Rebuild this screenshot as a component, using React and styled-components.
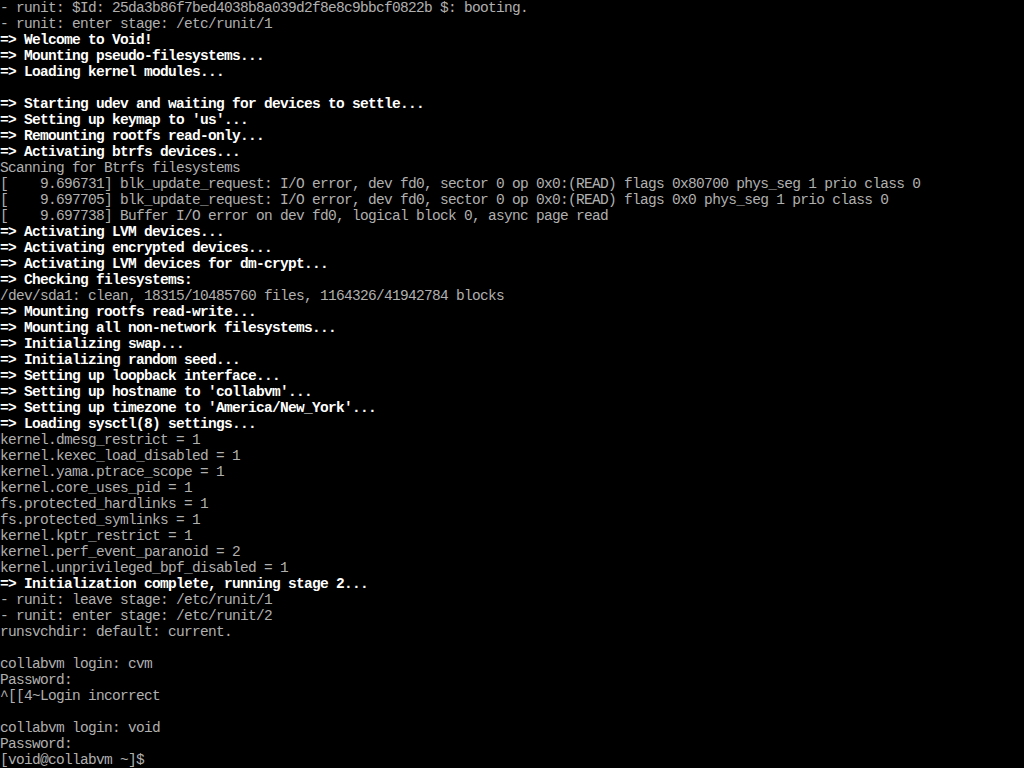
import React from "react";
import styled, { createGlobalStyle } from "styled-components";

const Global = createGlobalStyle`
  html, body {
    margin: 0;
    padding: 0;
    background: #000;
  }
  body {
    width: 1024px;
    height: 768px;
    overflow: hidden;
  }
`;

const Screen = styled.div`
  width: 1024px;
  height: 768px;
  background: #000;
  display: flex;
  flex-direction: column;
  overflow: hidden;
  font-family: "Liberation Mono", "DejaVu Sans Mono", monospace;
  font-size: 14.5px;
  letter-spacing: -0.7px;
`;

const Line = styled.div`
  height: 16px;
  line-height: 16px;
  white-space: pre;
  color: ${(p) => (p.$bright ? "#ffffff" : "#b0b0b0")};
  font-weight: ${(p) => (p.$bright ? 700 : 400)};
`;

const lines = [
  "- runit: $Id: 25da3b86f7bed4038b8a039d2f8e8c9bbcf0822b $: booting.",
  "- runit: enter stage: /etc/runit/1",
  "=> Welcome to Void!",
  "=> Mounting pseudo-filesystems...",
  "=> Loading kernel modules...",
  "",
  "=> Starting udev and waiting for devices to settle...",
  "=> Setting up keymap to 'us'...",
  "=> Remounting rootfs read-only...",
  "=> Activating btrfs devices...",
  "Scanning for Btrfs filesystems",
  "[    9.696731] blk_update_request: I/O error, dev fd0, sector 0 op 0x0:(READ) flags 0x80700 phys_seg 1 prio class 0",
  "[    9.697705] blk_update_request: I/O error, dev fd0, sector 0 op 0x0:(READ) flags 0x0 phys_seg 1 prio class 0",
  "[    9.697738] Buffer I/O error on dev fd0, logical block 0, async page read",
  "=> Activating LVM devices...",
  "=> Activating encrypted devices...",
  "=> Activating LVM devices for dm-crypt...",
  "=> Checking filesystems:",
  "/dev/sda1: clean, 18315/10485760 files, 1164326/41942784 blocks",
  "=> Mounting rootfs read-write...",
  "=> Mounting all non-network filesystems...",
  "=> Initializing swap...",
  "=> Initializing random seed...",
  "=> Setting up loopback interface...",
  "=> Setting up hostname to 'collabvm'...",
  "=> Setting up timezone to 'America/New_York'...",
  "=> Loading sysctl(8) settings...",
  "kernel.dmesg_restrict = 1",
  "kernel.kexec_load_disabled = 1",
  "kernel.yama.ptrace_scope = 1",
  "kernel.core_uses_pid = 1",
  "fs.protected_hardlinks = 1",
  "fs.protected_symlinks = 1",
  "kernel.kptr_restrict = 1",
  "kernel.perf_event_paranoid = 2",
  "kernel.unprivileged_bpf_disabled = 1",
  "=> Initialization complete, running stage 2...",
  "- runit: leave stage: /etc/runit/1",
  "- runit: enter stage: /etc/runit/2",
  "runsvchdir: default: current.",
  "",
  "collabvm login: cvm",
  "Password:",
  "^[[4~Login incorrect",
  "",
  "collabvm login: void",
  "Password:",
  "[void@collabvm ~]$ ",
];

export default function App() {
  return (
    <>
      <Global />
      <Screen>
        {lines.map((text, i) => (
          <Line key={i} $bright={text.startsWith("=>")}>
            {text}
          </Line>
        ))}
      </Screen>
    </>
  );
}
